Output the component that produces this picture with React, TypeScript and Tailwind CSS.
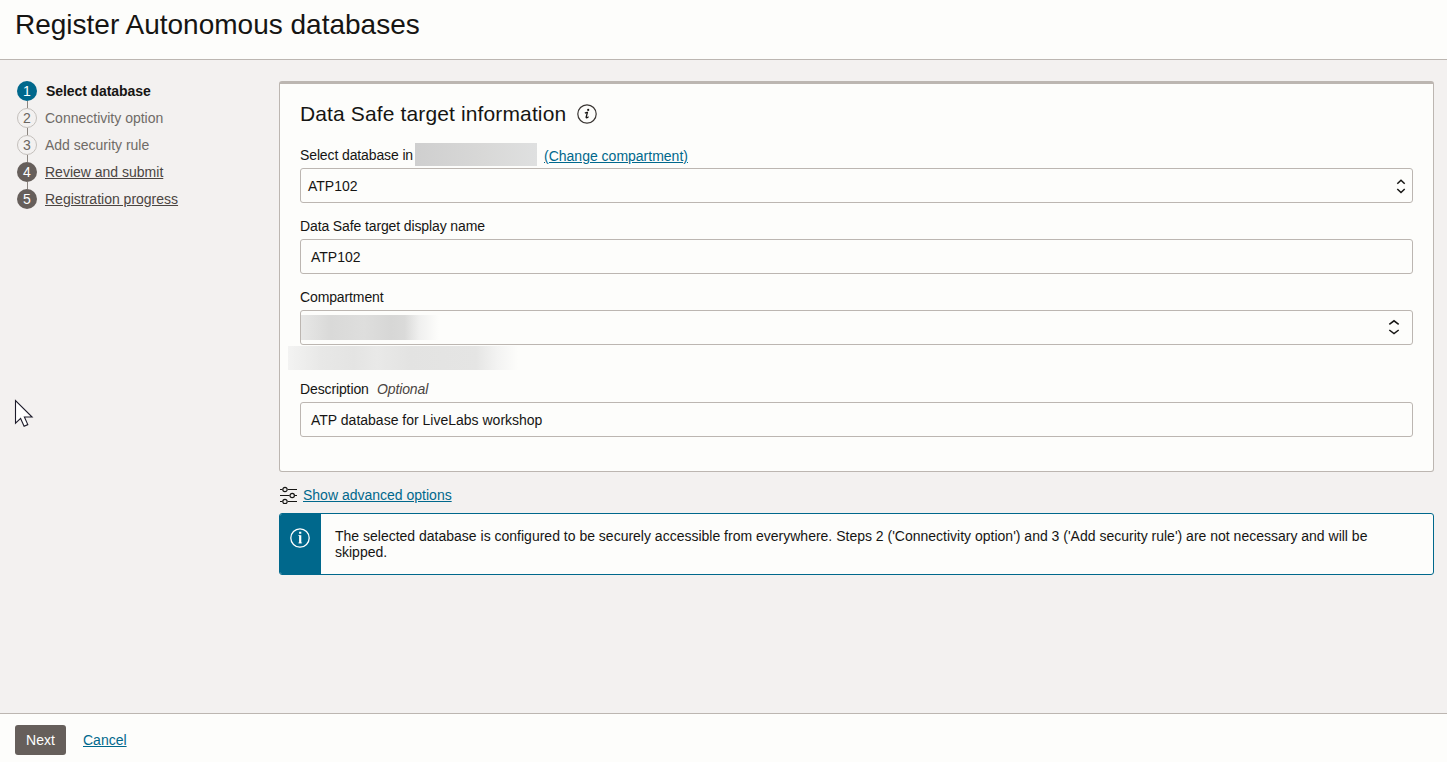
import React from "react";

type StepState = "current" | "skipped" | "upcoming";

const steps: { label: string; state: StepState }[] = [
  { label: "Select database", state: "current" },
  { label: "Connectivity option", state: "skipped" },
  { label: "Add security rule", state: "skipped" },
  { label: "Review and submit", state: "upcoming" },
  { label: "Registration progress", state: "upcoming" },
];

const circleStyles: Record<StepState, string> = {
  current: "bg-[#00688c] text-white",
  skipped: "border-[1.5px] border-[#c4c0bc] text-[#6b6661]",
  upcoming: "bg-[#665f5b] text-white",
};

const labelStyles: Record<StepState, string> = {
  current: "pl-px font-bold tracking-[-0.08px] text-[#161513]",
  skipped: "text-[#6f6b67]",
  upcoming: "text-[#4b4542] underline",
};

function Steps() {
  return (
    <ol className="flex flex-col pl-[17px] pt-[21px]">
      {steps.map((step, i) => (
        <li key={step.label} className="flex gap-2">
          <div className="flex w-5 flex-col items-center">
            <span
              className={`flex size-5 items-center justify-center rounded-full text-[14px] leading-none ${circleStyles[step.state]}`}
            >
              {i + 1}
            </span>
            {i < steps.length - 1 && <span className="ml-px h-[7px] w-px bg-[#8b8580]" />}
          </div>
          <span className={`leading-5 ${labelStyles[step.state]}`}>{step.label}</span>
        </li>
      ))}
    </ol>
  );
}

function UpDown({ wide = false }: { wide?: boolean }) {
  return wide ? (
    <svg className="-mt-px" width="12" height="16" viewBox="0 0 12 16" fill="none" stroke="#161513" strokeWidth="1.5">
      <path d="M1.3 5.4 6 1.8l4.7 3.6M1.3 11l4.7 3.6 4.7-3.6" />
    </svg>
  ) : (
    <svg width="10" height="16" viewBox="0 0 10 16" fill="none" stroke="#161513" strokeWidth="1.5">
      <path d="M1.3 5.8 5 2.2l3.7 3.6M1.3 11 5 14.5 8.7 11" />
    </svg>
  );
}

function Field({ className = "", children }: { className?: string; children: React.ReactNode }) {
  return (
    <div
      className={`flex h-[35px] items-center rounded-[3px] border border-[#bcb6b1] bg-[#fdfdfb] ${className}`}
    >
      {children}
    </div>
  );
}

export default function App() {
  return (
    <div className="relative flex h-[762px] w-[1447px] flex-col overflow-hidden bg-[#f3f1f0] font-['Liberation_Sans',Arial,sans-serif] text-[14px] leading-4 text-[#161513]">
      <header className="h-[60px] border-b border-[#bcb6b1] bg-[#fdfdfb] pl-[15px] pt-[9px]">
        <h1 className="text-[28px] leading-[32px]">Register Autonomous databases</h1>
      </header>

      <div className="flex flex-1">
        <aside className="w-[279px]">
          <Steps />
        </aside>

        <main className="w-[1155px] pt-[21px]">
          <section className="h-[391px] rounded-[3px] border border-t-[3px] border-[#bcb6b1] bg-[#fdfdfb] px-5">
            <div className="flex h-[59px] items-center pt-[1px]">
              <h2 className="w-[277px] whitespace-nowrap text-[21px] leading-6 tracking-[0.13px]">
                Data Safe target information
              </h2>
              <svg width="20" height="20" viewBox="0 0 20 20" fill="none" stroke="#3a3633">
                <circle cx="10" cy="10" r="9.2" strokeWidth="1.2" />
                <circle cx="11.2" cy="5.9" r="1.1" fill="#161513" stroke="none" />
                <path d="M7.9 9.2q1-.9 2.5-.9L9.2 13q-.2.9.5.8.9-.1 1.8-1.2" stroke="#161513" strokeWidth="1.3" />
              </svg>
            </div>

            <div className="flex h-[25px] items-start">
              <span className="w-[115px] whitespace-nowrap pt-1 tracking-[-0.12px]">Select database in</span>
              <span className="h-[23px] w-[122px] bg-linear-to-r from-[#cfcfcf] via-[#d8d8d7] via-55% to-[#dfe0e0]" />
              <a className="ml-[7px] pt-[5px] text-[#00688c] underline">(Change compartment)</a>
            </div>
            <Field className="justify-between pl-[7px] pr-[6px]">
              <span>ATP102</span>
              <UpDown />
            </Field>

            <div className="flex h-9 items-end pb-[5px] tracking-[-0.12px]">Data Safe target display name</div>
            <Field className="pl-[10px]">ATP102</Field>

            <div className="flex h-9 items-end pb-[5px] tracking-[-0.12px]">Compartment</div>
            <Field className="justify-between pr-3">
              <span className="h-[25px] w-[150px] bg-[linear-gradient(90deg,#e7e7e6_0%,#d9d9d8_20%,#dededd_42%,#d7d7d6_60%,#dadad9_69%,#f0f0ef_79%,#fdfdfb_92%)]" />
              <UpDown wide />
            </Field>

            <div className="-ml-3 mt-px h-6 w-[235px] bg-[linear-gradient(90deg,#f3f3f2_0%,#e8e8e7_14%,#e4e4e3_28%,#e9e9e8_38%,#e3e3e2_52%,#e5e5e4_80%,#f3f3f2_89%,#fdfdfb_98%)]" />

            <div className="flex h-8 items-end pb-[5px] tracking-[-0.12px]">
              <span className="w-[77px]">Description</span>
              <span className="italic text-[#4b4542]">Optional</span>
            </div>
            <Field className="pl-[10px]">ATP database for LiveLabs workshop</Field>
          </section>

          <div className="flex h-[41px] items-center gap-[5px] pt-[5px]">
            <svg className="ml-px" width="18" height="18" viewBox="0 0 18 18" fill="none" stroke="#161513" strokeWidth="1.2">
              <path d="M0 3.5h2.3M8 3.5h9M0 9.5h9.5M15 9.5h2M0 15.5h2.3M8 15.5h9" />
              <circle cx="5" cy="3.5" r="2.2" />
              <circle cx="12.2" cy="9.5" r="2.2" />
              <circle cx="5" cy="15.5" r="2.2" />
            </svg>
            <a className="-mt-px text-[#00688c] underline">Show advanced options</a>
          </div>

          <div className="flex h-[62px] overflow-hidden rounded-[3px] border border-[#00688c] bg-[#fdfdfb]">
            <div className="flex w-[41px] bg-[#00688c] pl-[10px] pt-[14px]">
              <svg width="20" height="20" viewBox="0 0 20 20" fill="none" stroke="#fff">
                <circle cx="10" cy="10" r="9.2" strokeWidth="1.3" />
                <path d="M10.2 7.2v8M10.2 3.8v2" strokeWidth="2.2" />
                <path d="M8.3 7.5h1.9M8.3 14.9h3.8" strokeWidth=".7" />
              </svg>
            </div>
            <p className="w-[1065px] pl-[14px] pt-[14px]">
              The selected database is configured to be securely accessible from everywhere. Steps 2
              ('Connectivity option') and 3 ('Add security rule') are not necessary and will be skipped.
            </p>
          </div>
        </main>
      </div>

      <footer className="flex h-[49px] items-center gap-[17px] border-t border-[#bcb6b1] bg-[#fdfdfb] pl-[15px] pt-[4px]">
        <button className="h-[30px] w-[51px] rounded-[3px] bg-[#665f5b] text-white">Next</button>
        <a className="text-[#00688c] underline">Cancel</a>
      </footer>

      <svg className="absolute left-[14px] top-[399px]" width="20" height="29" viewBox="0 0 20 29">
        <path
          d="M1.5 1.5v22.7l5.1-4.8 3.5 7.8 3.7-1.6-3.4-7.6h7.7z"
          fill="#fff"
          stroke="#1d1c2b"
          strokeWidth="1.1"
        />
      </svg>
    </div>
  );
}
